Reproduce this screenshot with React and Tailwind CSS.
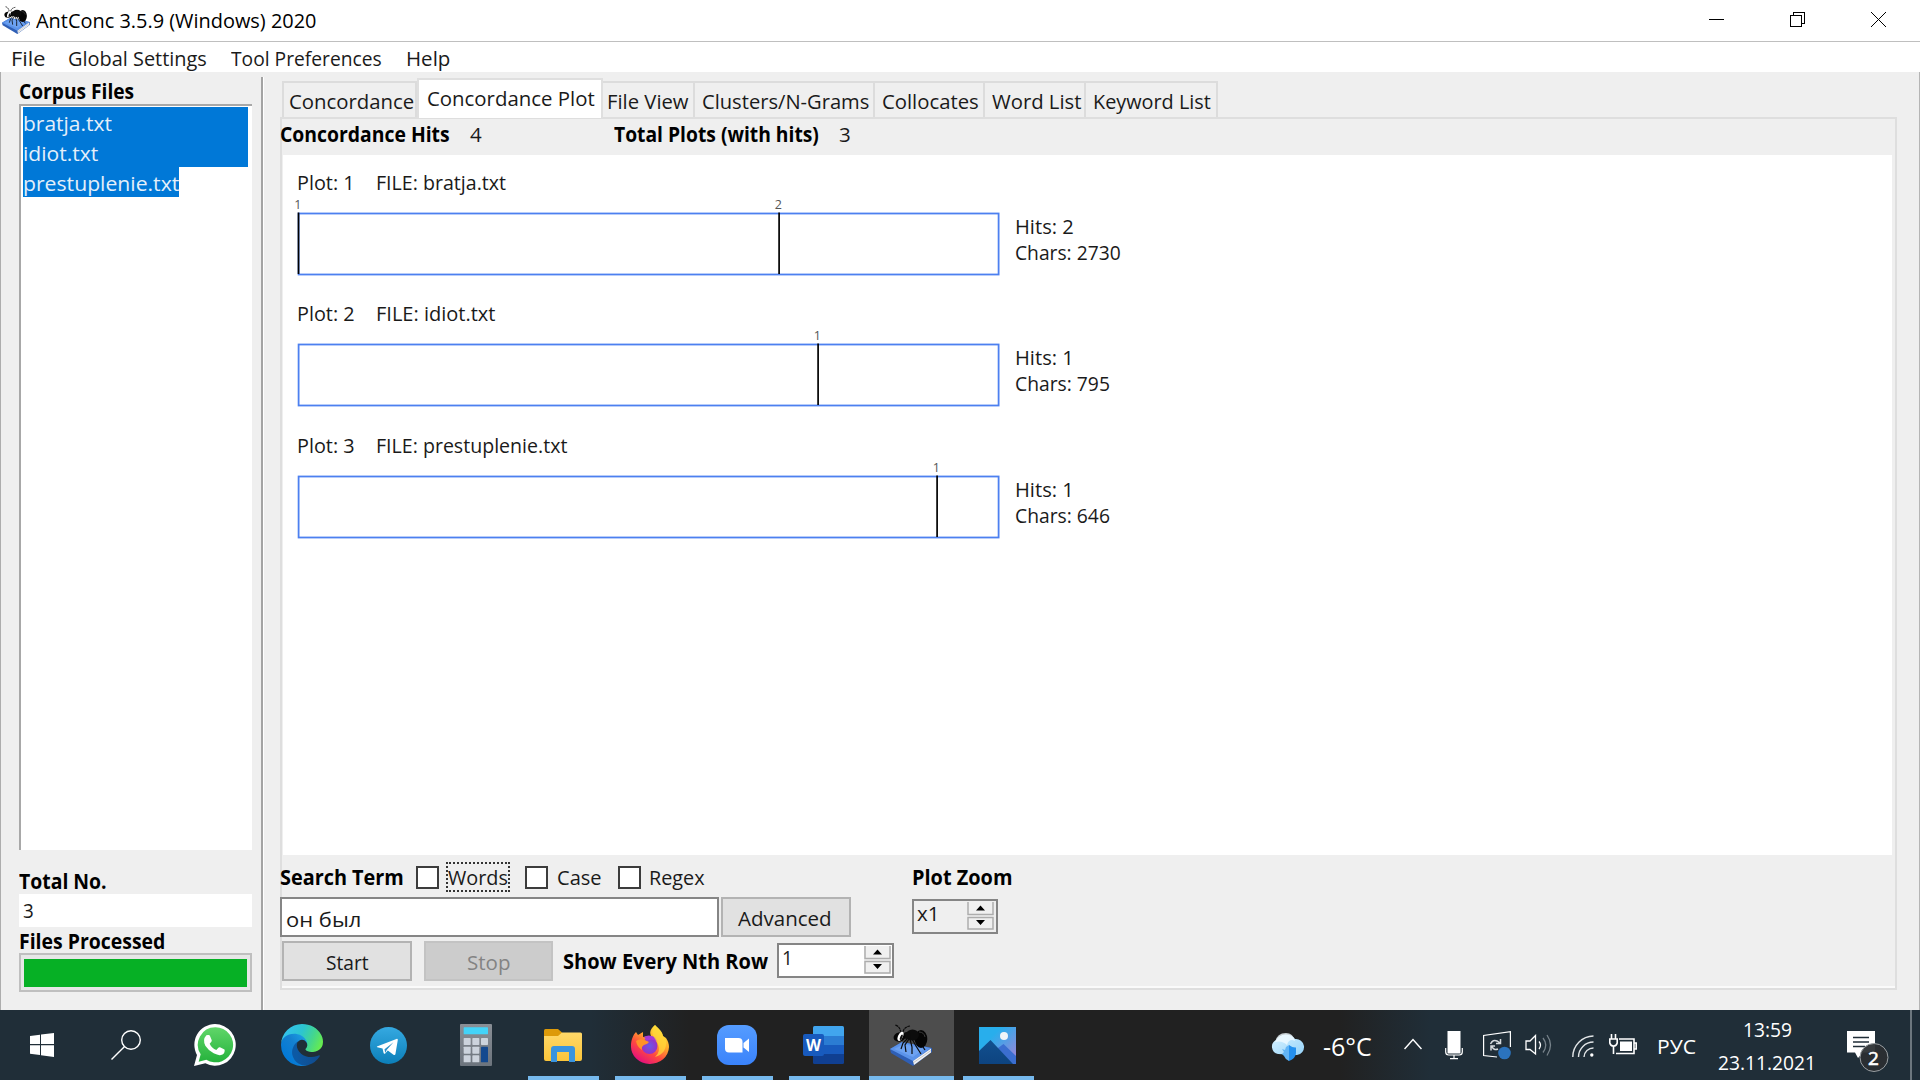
import React, { useLayoutEffect, useRef } from "react";

/* Text run that is condensed or widened to fill the width given by its class. */
function T({ className = "", children }) {
  const box = useRef(null);
  const run = useRef(null);
  useLayoutEffect(() => {
    const fit = () => {
      const natural = run.current.offsetWidth;
      if (natural) run.current.style.transform = `scaleX(${box.current.clientWidth / natural})`;
    };
    fit();
    if (document.fonts) document.fonts.ready.then(fit);
  }, []);
  return (
    <div ref={box} className={"shrink-0 whitespace-pre leading-6 " + className}>
      <span ref={run} className="inline-block origin-left whitespace-pre">{children}</span>
    </div>
  );
}

function AntBook({ className }) {
  return (
    <svg viewBox="0 0 42 42" className={className}>
      <path d="M0 25 L12 18 L42 24 L42 28 L23 42 L1 29Z" fill="#2f5fb5" />
      <path d="M0 25 L12 18 L41 24 L23 37Z" fill="#5b93ea" />
      <path d="M4 25 L14 20 L34 25 L23 33Z" fill="#79acf5" opacity=".6" />
      <path d="M23 37 L41 24.500 L41 28.500 L24 41Z" fill="#f2f2f2" />
      <path d="M23 39 L41 26.500" stroke="#aaa" strokeWidth=".6" />
      <g fill="none" stroke="#0a0a0a" strokeWidth="1.200">
        <path d="M11 9 Q10 2 5 1M13 8 Q14 3 20 2" strokeDasharray="3 .6" />
        <path d="M18 14 L13 19 L11 25M19 15 L15 21 L16 28M22 15 L26 22 L31 30M20 15 L22 23 L22 30M24 15 L31 20 L35 26" />
      </g>
      <ellipse cx="31" cy="15" rx="6.300" ry="9" fill="#050505" />
      <ellipse cx="22.500" cy="11" rx="6.500" ry="5.500" fill="#0c0c0c" />
      <ellipse cx="17" cy="11.500" rx="4" ry="3.500" fill="#0c0c0c" />
      <ellipse cx="9.500" cy="13" rx="6" ry="4.600" transform="rotate(-12 9.500 13)" fill="#050505" />
      <ellipse cx="10.500" cy="12.300" rx="2.400" ry="4.900" transform="rotate(24 10.500 12.300)" fill="#fff" />
      <ellipse cx="11.300" cy="13.300" rx="1.100" ry="2.900" transform="rotate(24 11.300 13.300)" fill="#111" />
      <path d="M29 8 Q34 8 35 13" stroke="#3a3a3a" fill="none" />
    </svg>
  );
}

function TitleBar() {
  return (
    <div className="flex h-[42px] items-start border-b border-[#bfbfbf] bg-white">
      <AntBook className="ml-[2px] mt-[6px] h-[28px] w-[28px]" />
      <T className="ml-[6px] mt-[9px] w-[281px] text-[19.5px] text-black">AntConc 3.5.9 (Windows) 2020</T>
      <svg className="ml-auto mr-[34px] mt-[12px] h-[15px] w-[177px]" viewBox="0 0 177 15" fill="none" stroke="#000" shapeRendering="crispEdges">
        <path d="M0 7.5H15" />
        <path d="M81.5 3.5H92.5V14.5H81.5ZM84.5 3.5V.5H95.5V11.5H92.5" />
        <path d="M162 0L177 15M177 0L162 15" shapeRendering="auto" />
      </svg>
    </div>
  );
}

function MenuBar() {
  return (
    <div className="flex h-[30px] bg-white pl-[11px] pt-[4px]">
      <T className="w-[34px]">File</T>
      <T className="ml-[23px] w-[139px]">Global Settings</T>
      <T className="ml-[24px] w-[151px]">Tool Preferences</T>
      <T className="ml-[24px] w-[44px]">Help</T>
    </div>
  );
}

function Sidebar() {
  return (
    <aside className="flex w-[260px] shrink-0 flex-col border-l border-[#adadad] pl-[18px] pt-[7px]">
      <T className="w-[115px] font-bold text-black">Corpus Files</T>
      <div className="mt-px h-[746px] w-[233px] border-l-2 border-t-2 border-[#a8a8a8] bg-white pl-[2px] pt-px text-[#e4effa]">
        <div className="h-[30px] w-[225px] bg-[#0078d7] pt-[4px]"><T className="w-[89px]">bratja.txt</T></div>
        <div className="h-[30px] w-[225px] bg-[#0078d7] pt-[4px]"><T className="w-[75px]">idiot.txt</T></div>
        <div className="h-[30px] w-[156px] bg-[#0078d7] pt-[4px]"><T className="w-[156px]">prestuplenie.txt</T></div>
      </div>
      <T className="mt-[19px] w-[88px] font-bold text-black">Total No.</T>
      <div className="mt-px h-[33px] w-[233px] bg-white pl-[4px] pt-[4px]"><T className="w-[11px]">3</T></div>
      <T className="mt-[2px] w-[146px] font-bold text-black">Files Processed</T>
      <div className="h-[39px] w-[233px] border-2 border-[#bfbfbf] bg-[#e7e7e7] pl-[3px] pt-[4px]">
        <div className="h-[28px] w-[223px] bg-[#06b025]" />
      </div>
    </aside>
  );
}

const TABS = [
  ["Concordance", "w-[135px]", "w-[125px]"],
  ["Concordance Plot", "w-[186px]", "w-[168px]"],
  ["File View", "w-[92px]", "w-[82px]"],
  ["Clusters/N-Grams", "w-[180px]", "w-[167px]"],
  ["Collocates", "w-[110px]", "w-[97px]"],
  ["Word List", "w-[101px]", "w-[89px]"],
  ["Keyword List", "w-[132px]", "w-[118px]"],
];

function Tabs() {
  return (
    <div className="flex h-[39px] shrink-0 items-end pl-[2px]">
      {TABS.map(([label, tab, text], i) =>
        i === 1 ? (
          <div key={label} className={"z-10 -mb-px flex h-[40px] border-2 border-b-0 border-[#dfdfdf] bg-white pl-[8px] pt-[6px] " + tab}>
            <T className={text}>{label}</T>
          </div>
        ) : (
          <div key={label} className={"flex h-[36px] border-r-2 border-t-2 border-[#dcdcdc] pt-[6px] " + (i === 0 ? "border-l-2 border-r-0 pl-[5px] " : i === 2 ? "pl-[4px] " : "pl-[7px] ") + tab}>
            <T className={text}>{label}</T>
          </div>
        )
      )}
    </div>
  );
}

const PLOTS = [
  { n: 1, file: "bratja.txt", h: "h-[131px]", fw: "w-[130px]", marks: [0.9, 481.5], hits: 2, chars: 2730, cw: "w-[106px]" },
  { n: 2, file: "idiot.txt", h: "h-[132px]", fw: "w-[119px]", marks: [520.5], hits: 1, chars: 795, cw: "w-[95px]" },
  { n: 3, file: "prestuplenie.txt", h: "h-[131px]", fw: "w-[191px]", marks: [639.5], hits: 1, chars: 646, cw: "w-[95px]" },
];

function Plot({ p }) {
  return (
    <div className={p.h}>
      <div className="flex">
        <T className="w-[58px]">{"Plot: " + p.n}</T>
        <T className={"ml-[21px] " + p.fw}>{"FILE: " + p.file}</T>
      </div>
      <div className="flex">
        <svg className="-ml-[4px] h-[84px] w-[710px]" viewBox="-4.6 0 710 84">
          <rect x="1" y="19.5" width="700" height="61" fill="#fff" stroke="#4d80f0" strokeWidth="1.8" />
          {p.marks.map((x, i) => (
            <g key={x}>
              <path d={`M${x} 18.5V80`} stroke="#000" strokeWidth="1.7" />
              <text x={x - 0.7} y="14.500" fontSize="12.5" textAnchor="middle" fill="#555">{i + 1}</text>
            </g>
          ))}
        </svg>
        <div className="ml-[12px] pt-[20px]">
          <T className="w-[59px]">{"Hits: " + p.hits}</T>
          <T className={"mt-[2px] " + p.cw}>{"Chars: " + p.chars}</T>
        </div>
      </div>
    </div>
  );
}

const Check = ({ className }) => <div className={"h-[23px] w-[23px] shrink-0 border-2 border-[#3c3c3c] bg-white " + className} />;

function Stepper({ className = "mr-[2px]" }) {
  return (
    <svg viewBox="0 0 27 28" className={"ml-auto mt-px h-[28px] w-[27px] shrink-0 " + className}>
      <rect width="27" height="28" fill="#f0f0f0" />
      <path d="M1 0V12.500H26V0M1 15.500H26V27H1Z" fill="none" stroke="#adadad" strokeWidth="1.5" />
      <path d="M9 8.500L13.500 3.500L18 8.500ZM9 18L13.500 23L18 18Z" fill="#000" />
    </svg>
  );
}

function Controls() {
  return (
    <div className="flex h-[133px] border-b-2 border-[#fafafa]">
      <div className="-ml-[2px] w-[632px] shrink-0 pt-[7px]">
        <div className="flex h-[30px] items-center">
          <T className="w-[124px] font-bold text-black">Search Term</T>
          <Check className="ml-[12px]" />
          <div className="ml-[7px] flex h-[30px] w-[64px] items-center border-2 border-dotted border-[#333]">
            <T className="w-[60px]">Words</T>
          </div>
          <Check className="ml-[15px]" />
          <T className="ml-[9px] w-[45px]">Case</T>
          <Check className="ml-[16px]" />
          <T className="ml-[8px] w-[56px]">Regex</T>
        </div>
        <div className="mt-[5px] flex h-[40px]">
          <div className="flex w-[439px] border-2 border-[#858585] bg-white pl-[4px] pt-[8px]">
            <T className="w-[75px]">он был</T>
          </div>
          <div className="ml-[2px] flex w-[130px] justify-center border-2 border-[#b3b3b3] bg-[#e1e1e1] pr-[2px] pt-[7px]">
            <T className="w-[94px]">Advanced</T>
          </div>
        </div>
        <div className="mt-[4px] flex h-[40px] items-start pl-[2px]">
          <div className="flex h-[40px] w-[130px] justify-center border-2 border-[#b3b3b3] bg-[#e1e1e1] pt-[7px]">
            <T className="w-[43px]">Start</T>
          </div>
          <div className="ml-[12px] flex h-[40px] w-[129px] justify-center border-2 border-[#c3c3c3] bg-[#cccccc] pt-[7px] text-[#838383]">
            <T className="w-[43px]">Stop</T>
          </div>
          <T className="ml-[10px] mt-[8px] w-[205px] font-bold text-black">Show Every Nth Row</T>
          <div className="ml-[9px] mt-[2px] flex h-[35px] w-[117px] border-2 border-[#858585] bg-white pl-[3px]">
            <T className="w-[11px] text-[#222]">1</T>
            <Stepper className="mr-px" />
          </div>
        </div>
      </div>
      <div className="pt-[10px]">
        <T className="w-[100px] font-bold text-black">Plot Zoom</T>
        <div className="mt-[10px] flex h-[35px] w-[86px] border-2 border-[#858585] pl-[3px]">
          <T className="w-[22px]">x1</T>
          <Stepper />
        </div>
      </div>
    </div>
  );
}

/* ---------- taskbar icons ---------- */
const WinLogo = () => (
  <svg viewBox="0 0 72 72" className="h-6 w-6" fill="#fff">
    <path d="M0 9L30 5V33H0ZM33 4.600L72 0V33H33ZM0 37H30V66L0 62ZM33 37H72V72L33 67Z" />
  </svg>
);
const Search = () => (
  <svg viewBox="0 0 30 30" className="h-[30px] w-[30px]" fill="none" stroke="#fff" strokeWidth="1.4">
    <circle cx="20" cy="10" r="9.300" />
    <path d="M13.300 16.700L.5 29.500" />
  </svg>
);
const WhatsApp = () => (
  <svg viewBox="0 0 126 126" className="h-[42px] w-[42px]">
    <defs><linearGradient id="wa" x1="0" y1="0" x2="0" y2="1"><stop offset="0" stopColor="#60d669" /><stop offset="1" stopColor="#25b23c" /></linearGradient></defs>
    <path d="M63 0A62.500 62.500 0 1 1 34 118L0 126L9 93A62.500 62.500 0 0 1 63 0Z" fill="#fff" />
    <path d="M64 10A52.500 52.500 0 1 1 37 107L14 113L20 91A52.500 52.500 0 0 1 64 10Z" fill="url(#wa)" />
    <path d="M37 34q3-2 7-1q3 0 4 3l5 12q1 3-1 5l-5 6q6 13 20 19l6-7q2-2 5-1l12 6q3 1 2 5q-1 10-11 12q-8 2-22-5q-16-9-25-23q-9-18 3-31Z" fill="#fff" />
  </svg>
);
const Edge = () => (
  <svg viewBox="0 0 256 256" className="h-[42px] w-[42px]">
    <defs>
      <linearGradient id="e1" x1=".2" y1=".6" x2="1" y2=".6"><stop offset="0" stopColor="#0c59a4" /><stop offset="1" stopColor="#114a8b" /></linearGradient>
      <linearGradient id="e2" x1=".9" y1=".2" x2=".2" y2=".9"><stop offset="0" stopColor="#1b9de2" /><stop offset=".4" stopColor="#1480d0" /><stop offset="1" stopColor="#0078d7" /></linearGradient>
      <linearGradient id="e3" x1="0" y1=".3" x2="1" y2=".6"><stop offset="0" stopColor="#35c1f1" /><stop offset=".45" stopColor="#2cc5d0" /><stop offset=".75" stopColor="#45d78b" /><stop offset="1" stopColor="#66eb50" /></linearGradient>
    </defs>
    <g transform="translate(-4.630 -4.920)">
      <path fill="url(#e1)" d="M235.680 195.460a93.730 93.730 0 0 1-10.540 4.710 101.870 101.870 0 0 1-35.900 6.460c-47.320 0-88.540-32.550-88.540-74.320A31.480 31.480 0 0 1 117.130 105c-42.800 1.800-53.800 46.400-53.800 72.530 0 73.880 68.090 81.370 82.760 81.370 7.910 0 19.840-2.300 27-4.560l1.310-.44a128.340 128.340 0 0 0 66.600-52.800 4 4 0 0 0-5.320-5.640Z" />
      <path fill="url(#e2)" d="M110.340 246.340A79.200 79.200 0 0 1 87.600 225a80.720 80.720 0 0 1 29.530-120c3.120-1.470 8.450-4.130 15.540-4a32.350 32.350 0 0 1 25.690 13 31.880 31.880 0 0 1 6.360 18.660c0-.21 24.460-79.600-80-79.600-43.900 0-80 41.660-80 78.210a130.150 130.150 0 0 0 12.110 56 128 128 0 0 0 156.380 67.110 75.550 75.550 0 0 1-62.780-8Z" />
      <path fill="url(#e3)" d="M156.940 153.780c-.81 1.050-3.300 2.500-3.300 5.660 0 2.610 1.700 5.120 4.720 7.230 14.380 10 41.490 8.680 41.560 8.680a59.560 59.560 0 0 0 30.270-8.350 61.380 61.380 0 0 0 30.430-52.880c.26-22.410-8-37.310-11.340-43.910C228.090 28.760 182.350 4.920 132.610 4.920a128 128 0 0 0-128 126.200c.48-36.540 36.800-66.050 80-66.050 3.500 0 23.460.34 42 10.070 16.340 8.580 24.900 18.940 30.850 29.210 6.180 10.670 7.280 24.150 7.280 29.520s-2.740 13.330-7.800 19.910Z" />
    </g>
  </svg>
);
const Telegram = () => (
  <svg viewBox="0 0 112 112" className="h-[37px] w-[37px]">
    <defs><linearGradient id="tg" x1="0" y1="0" x2="0" y2="1"><stop offset="0" stopColor="#35a9e1" /><stop offset="1" stopColor="#0c7fb9" /></linearGradient></defs>
    <circle cx="56" cy="56" r="56" fill="url(#tg)" />
    <path d="M21 59L80 36q5-1 4 4L77 82q-1 5-6 2L54 71L46 80q-4 2-5-2L38 65L22 61q-2-1-1-2Z" fill="#fff" />
    <path d="M44 67L71 46L51 69L46 79Z" fill="#2b8fc6" />
  </svg>
);
const Calculator = () => (
  <svg viewBox="0 0 96 126" className="h-[42px] w-[32px]">
    <defs><linearGradient id="ca" x1="0" y1="0" x2="0" y2="1"><stop offset="0" stopColor="#8a8f96" /><stop offset="1" stopColor="#6c747d" /></linearGradient></defs>
    <rect width="96" height="126" rx="3" fill="url(#ca)" />
    <rect x="11" y="10" width="73" height="21" rx="2" fill="#43d3f8" />
    <g fill="#ccd3dc">
      {[[11, 42], [37, 42], [63, 42], [11, 68], [37, 68], [11, 94], [37, 94]].map(([x, y]) => <rect key={x + "-" + y} x={x} y={y} width="21" height="21" rx="2" />)}
    </g>
    <rect x="63" y="68" width="21" height="47" rx="2" fill="#13498f" />
  </svg>
);
const Folder = () => (
  <svg viewBox="0 0 38 33" className="h-[33px] w-[38px]">
    <defs><linearGradient id="fo" x1="0" y1="0" x2="0" y2="1"><stop offset="0" stopColor="#ffd869" /><stop offset="1" stopColor="#fbc53a" /></linearGradient></defs>
    <path d="M0 1.500Q0 0 1.500 0H14L18 3.500V8H0Z" fill="#dd9a09" />
    <path d="M0 7H14L18 3.500H36.500Q38 3.500 38 5V30Q38 32 36 32H2Q0 32 0 30Z" fill="url(#fo)" />
    <path d="M7 33V20Q7 17 10 17H28Q31 17 31 20V33H25V23H13V33Z" fill="#3a94df" />
  </svg>
);
const Firefox = () => (
  <svg viewBox="0 0 38 42" className="h-[42px] w-[38px]">
    <defs>
      <linearGradient id="f1" x1=".8" y1=".1" x2=".25" y2=".95"><stop offset="0" stopColor="#ffe63c" /><stop offset=".35" stopColor="#ffa62b" /><stop offset=".65" stopColor="#ff4a3f" /><stop offset="1" stopColor="#e4107d" /></linearGradient>
      <radialGradient id="f2"><stop offset="0" stopColor="#6a59e8" /><stop offset="1" stopColor="#9832c5" /></radialGradient>
    </defs>
    <path d="M24 1C28 5 31 7 32 12L35 14C37 17 38 20 38 23A19 17.500 0 0 1 0 22C0 16 2 11 5 8L7 11L12 8V13C16 12 18 13 20 12C18 8 20 4 24 1Z" fill="url(#f1)" />
    <circle cx="18.500" cy="22" r="8" fill="url(#f2)" />
    <path d="M5 17Q10 13 18 18Q17 20 13 21Q10 23 11 26Q6 23 5 17Z" fill="#ff9328" />
    <path d="M13 13Q17 10 24 13L27 18Q21 14 16 17Z" fill="#a438d8" />
    <path d="M24 1C28 5 31 7 32 12L35 16C36 25 32 31 24 33Q30 28 27 20C24 13 18 11 24 1Z" fill="#ffd83a" opacity=".75" />
  </svg>
);
const Zoom = () => (
  <svg viewBox="0 0 40 42" className="h-[42px] w-10">
    <defs><linearGradient id="zo" x1="0" y1="0" x2="0" y2="1"><stop offset="0" stopColor="#559cff" /><stop offset="1" stopColor="#3a83fb" /></linearGradient></defs>
    <rect y="1" width="40" height="40" rx="12" fill="url(#zo)" />
    <path d="M8 14H21.500Q25.500 14 25.500 18V28.500H12Q8 28.500 8 24.500Z" fill="#fff" />
    <path d="M26.500 19L32 14.500V28L26.500 23.500Z" fill="#fff" />
  </svg>
);
const Word = () => (
  <svg viewBox="0 0 41 38" className="h-[38px] w-[41px]">
    <path d="M10 10V1.500Q10 0 11.500 0H39.500Q41 0 41 1.500V10Z" fill="#41a5ee" />
    <path d="M10 10H41V19H10Z" fill="#2b7cd3" />
    <path d="M10 19H41V28H10Z" fill="#185abd" />
    <path d="M10 28H41V36.500Q41 38 39.500 38H11.500Q10 38 10 36.500Z" fill="#103f91" />
    <rect y="8" width="21" height="22" rx="2" fill="#185abd" />
    <text x="10.500" y="24.500" fontSize="15.500" fontWeight="700" textAnchor="middle" fill="#fff">W</text>
  </svg>
);
const Photos = () => (
  <svg viewBox="0 0 37 37" className="h-[37px] w-[37px]">
    <defs>
      <linearGradient id="ph" x1="0" y1="0" x2="1" y2="1"><stop offset=".3" stopColor="#28aeec" /><stop offset="1" stopColor="#a97fd6" /></linearGradient>
      <linearGradient id="pm" x1="0" y1="0" x2="0" y2="1"><stop offset="0" stopColor="#12508f" /><stop offset="1" stopColor="#0d4480" /></linearGradient>
    </defs>
    <rect width="37" height="37" fill="url(#ph)" />
    <path d="M15 37V24L24.500 17L37 29V37Z" fill="#3b6ed0" />
    <path d="M0 24L11.500 13L34 37H0Z" fill="url(#pm)" />
    <circle cx="25" cy="9" r="4" fill="#f1f4f8" />
  </svg>
);

const Slot = ({ children, active, running }) => (
  <div className="flex h-[70px] w-[87px] shrink-0 flex-col items-center">
    <div className={"flex h-[66px] w-[85px] items-center justify-center pr-[2px] pt-[4px] " + (active ? "bg-[#4d4d4d]" : "")}>{children}</div>
    {running && <div className={"h-1 bg-[#76b9ed] " + (active ? "w-[85px]" : "w-[71px]")} />}
  </div>
);

function Tray() {
  return (
    <div className="flex items-start text-white">
      <svg viewBox="0 0 36 30" className="ml-[228px] mt-[22px] h-[30px] w-9">
        <defs><linearGradient id="cl" x1="0" y1="0" x2="1" y2="1"><stop offset="0" stopColor="#d9f3ff" /><stop offset="1" stopColor="#94d2fa" /></linearGradient></defs>
        <path d="M8 22A7.500 7.500 0 0 1 6 8A11 10 0 0 1 25 7A8 8 0 0 1 27 23Z" fill="url(#cl)" />
        <path d="M5 10Q7 1 16 1Q23 1 25 9Q19 6 17 13Q12 8 5 10Z" fill="#f0faff" opacity=".8" />
        <path d="M19 13Q23 16 26 15.500V21Q26 26 19 29Z" fill="#2490ef" />
        <path d="M19 13V29Q15 27 14 24L12 22L14 20L12 17L15 18L16 15Z" fill="#62b5f6" />
      </svg>
      <T className="ml-[17px] mt-[24px] w-[49px] text-[25px]">-6°C</T>
      <svg viewBox="0 0 18 12" className="ml-[32px] mt-[28px] h-3 w-[18px]" fill="none" stroke="#fff" strokeWidth="1.5"><path d="M.5 11L9 1.500L17.500 11" /></svg>
      <svg viewBox="0 0 18 29" className="ml-[23px] mt-[21px] h-[29px] w-[18px]">
        <rect x="2.500" width="13" height="22.500" fill="#fff" />
        <path d="M.7 17V21Q.7 24 3.700 24H14.300Q17.300 24 17.300 21V17M9 24V28M5 27.700H13" fill="none" stroke="#fff" strokeWidth="1.200" />
      </svg>
      <svg viewBox="0 0 28 29" className="ml-[20px] mt-[21px] h-[29px] w-7" fill="none" stroke="#fff" strokeWidth="1.200">
        <path d="M14 26L.6 24.500V4.500L27.400.7V16" />
        <path d="M7.500 13Q10 8 14 10L17 12M17.500 8V12.500H13M15 18Q11 20 8.500 15M8 19.500V15H12" stroke="#d5d9dc" strokeWidth="1.500" />
        <circle cx="21.500" cy="22" r="6.300" fill="#2b73bd" stroke="none" />
      </svg>
      <svg viewBox="0 0 28 22" className="ml-[14px] mt-6 h-[22px] w-7" fill="none" stroke="#fff" strokeWidth="1.300">
        <path d="M1 7H5L10.500 1.500V20L5 15.500H1Z" />
        <path d="M14 7.500Q17 11 14 15" />
        <path d="M18 4Q23.500 11 18 18.500M22 1Q29 11 22 21.500" stroke="#78838b" />
      </svg>
      <svg viewBox="0 0 22 22" className="ml-[19px] mt-[25px] h-[22px] w-[22px]" fill="none" stroke="#e2e5e7" strokeWidth="1.400">
        <path d="M.8 22A21 21 0 0 1 21.500 1M6.500 22A15 15 0 0 1 21.500 7M12 22A9.500 9.500 0 0 1 21.500 13" />
        <circle cx="19.800" cy="20" r="1.700" fill="#fff" stroke="none" />
      </svg>
      <svg viewBox="0 0 28 22" className="ml-[15px] mt-6 h-[22px] w-7" fill="none" stroke="#fff" strokeWidth="1.600">
        <path d="M10 5H25V19.500H7M25 9H27.200V15H25" />
        <rect x="11" y="7.500" width="12" height="9.500" fill="#fff" stroke="none" />
        <path d="M2.500 0V5M6.500 0V5M.8 5H8.200V9Q7.500 12 4.500 12Q1.500 12 .8 9ZM4.500 12V20" />
      </svg>
      <T className="ml-[20px] mt-[25px] w-[39px] text-[20px]">РУС</T>
      <div className="ml-[22px] flex w-[98px] flex-col items-center pt-[8px] text-[20px]">
        <T className="w-[49px]">13:59</T>
        <T className="mt-[9px] w-[98px]">23.11.2021</T>
      </div>
      <svg viewBox="0 0 42 42" className="ml-[31px] mt-[21px] h-[42px] w-[42px]">
        <path d="M0 0H28V21.500H16L11 27L8 21.500H0Z" fill="#fff" />
        <path d="M6 6.500H22M6 11H22M6 15.500H18" stroke="#202e38" strokeWidth="1.400" />
        <circle cx="27" cy="26.500" r="14" fill="#2b2f32" fillOpacity=".94" stroke="#9a9fa3" />
        <text x="26.500" y="33.500" fontSize="19" textAnchor="middle" fill="#fff" stroke="#fff" strokeWidth=".6">2</text>
      </svg>
      <div className="ml-[21px] h-[70px] w-[2px] bg-[#6d777e]" />
    </div>
  );
}

export default function App() {
  return (
    <div className="flex h-[1080px] w-[1920px] flex-col overflow-hidden bg-[#efefef] font-['Open_Sans','Noto_Sans',sans-serif] text-[20.5px] text-[#1a1a1a]">
      <TitleBar />
      <MenuBar />
      <div className="flex h-[938px] shrink-0 border-r border-[#b5b5b5]">
        <Sidebar />
        <div className="ml-px mt-[5px] w-[3px] shrink-0 border-r border-white bg-[#a3a3a3]" />
        <main className="ml-[16px] flex w-[1617px] shrink-0 flex-col pt-[6px]">
          <Tabs />
          <section className="h-[873px] shrink-0 border-2 border-[#dedede]">
            <div className="flex h-[36px] pt-[3px]">
              <T className="-ml-[2px] w-[170px] font-bold text-black">Concordance Hits</T>
              <T className="ml-[20px] w-[12px]">4</T>
              <T className="ml-[132px] w-[205px] font-bold text-black">Total Plots (with hits)</T>
              <T className="ml-[20px] w-[12px]">3</T>
            </div>
            <div className="ml-px h-[700px] w-[1609px] bg-white pl-[14px] pt-[15px]">
              {PLOTS.map((p) => <Plot key={p.n} p={p} />)}
            </div>
            <Controls />
          </section>
        </main>
      </div>
      <div className="flex h-[70px] shrink-0 bg-[linear-gradient(90deg,#202e38_0px,#202e38_590px,#212121_690px,#212121_1340px,#202e38_1430px,#202e38_1920px)]">
        <div className="flex w-[84px] items-center justify-center"><WinLogo /></div>
        <div className="flex w-[84px] items-center justify-center"><Search /></div>
        <div className="ml-1 flex">
          <Slot><WhatsApp /></Slot>
          <Slot><Edge /></Slot>
          <Slot><Telegram /></Slot>
          <Slot><Calculator /></Slot>
          <Slot running><Folder /></Slot>
          <Slot running><Firefox /></Slot>
          <Slot running><Zoom /></Slot>
          <Slot running><Word /></Slot>
          <Slot running active><AntBook className="h-[42px] w-[42px]" /></Slot>
          <Slot running><Photos /></Slot>
        </div>
        <Tray />
      </div>
    </div>
  );
}
